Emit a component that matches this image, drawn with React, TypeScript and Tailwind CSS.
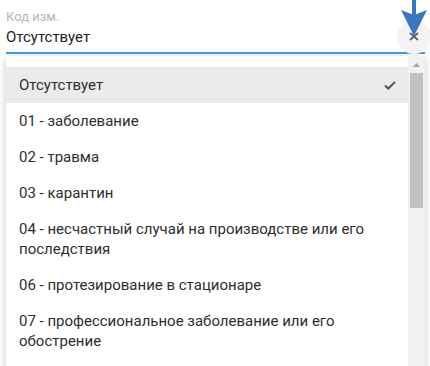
import React from "react";

const items: string[][] = [
  ["Отсутствует"],
  ["01 - заболевание"],
  ["02 - травма"],
  ["03 - карантин"],
  ["04 - несчастный случай на производстве или его", "последствия"],
  ["06 - протезирование в стационаре"],
  ["07 - профессиональное заболевание или его", "обострение"],
];

export default function App() {
  return (
    <div className="relative h-[366px] w-[430px] overflow-hidden bg-white font-['Roboto',sans-serif]">
      <div className="relative ml-[6px] mr-[5px] pt-[9px] border-b-2 border-[#3d9bd9]">
        <div className="text-[13px] leading-[15px] text-[#b5b5b5]">Код изм.</div>
        <div className="mt-[3px] mb-[5px] text-[15px] leading-[20px] text-[#222]">Отсутствует</div>
        <div className="absolute left-[391px] top-[20px] h-[34px] w-[34px] rounded-full bg-[#f3f3f3]" />
        <svg className="absolute left-[403px] top-[32px]" width="10" height="9" viewBox="0 0 10 9">
          <path d="M1 1 L9 8 M9 1 L1 8" stroke="#5f5f5f" strokeWidth="1.8" />
        </svg>
      </div>
      <div className="ml-[6px] mt-[2px] h-[330px] w-[419px] bg-white shadow-[0_2px_8px_rgba(0,0,0,0.22)] flex">
        <div className="flex-1 pt-[11px]">
          {items.map((lines, i) => (
            <div
              key={i}
              className={`flex items-center justify-between pl-[13px] pr-[12px] py-2 text-[15px] leading-[20px] text-[#2e2e2e] ${i === 0 ? "bg-[#ebebeb]" : ""}`}
            >
              <div>
                {lines.map((l, j) => (
                  <div key={j}>{l}</div>
                ))}
              </div>
              {i === 0 && (
                <svg width="12" height="9" viewBox="0 0 12 9">
                  <path d="M1 4.5 L4.2 7.5 L11 1" fill="none" stroke="#555" strokeWidth="2" />
                </svg>
              )}
            </div>
          ))}
        </div>
        <div className="w-[17px] bg-[#f1f1f1] flex flex-col">
          <div className="h-[17px] flex items-center justify-center">
            <svg width="7" height="4" viewBox="0 0 7 4">
              <path d="M0 4 L3.5 0 L7 4 Z" fill="#a3a3a3" />
            </svg>
          </div>
          <div className="mx-[2px] h-[135px] bg-[#c1c1c1]" />
        </div>
      </div>
      <svg className="absolute left-[399px] top-0" width="30" height="37" viewBox="0 0 30 37">
        <rect x="13" y="0" width="4" height="16" fill="#3a77c0" />
        <path d="M2 10 L15 15 L28 10 L15 36 Z" fill="#3a77c0" />
      </svg>
    </div>
  );
}
